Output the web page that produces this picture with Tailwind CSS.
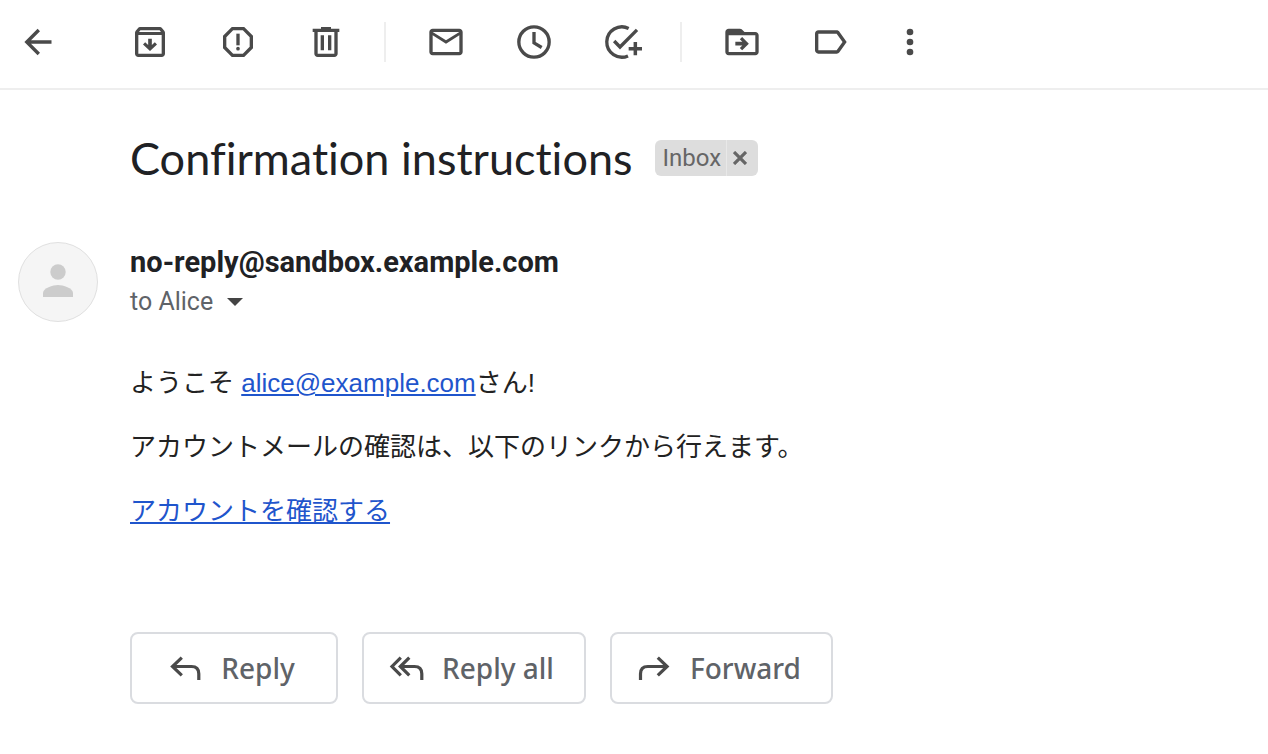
<!DOCTYPE html>
<html lang="ja">
<head>
  <meta charset="UTF-8" />
  <meta name="viewport" content="width=device-width, initial-scale=1" />
  <title>Confirmation instructions</title>
  <script src="https://cdn.jsdelivr.net/npm/@tailwindcss/browser@4"></script>
</head>
<body class="bg-white text-[#202124] font-[Roboto,'Noto_Sans_CJK_JP',sans-serif]">

  <!-- Toolbar -->
  <header class="flex items-center border-b-2 border-[#eeeeee] pt-[22px] pb-[26px] pl-[18px] text-[#4a4a4a]">
    <button type="button" aria-label="Back" class="mr-[72px]">
      <svg class="size-10" viewBox="0 0 40 40" fill="none" stroke="currentColor" stroke-width="3.4"><path d="M33.5 20H9M20.8 8L8.8 20l12 12"/></svg>
    </button>

    <div class="flex gap-12">
      <button type="button" aria-label="Archive">
        <svg class="size-10" viewBox="0 0 24 24" fill="currentColor"><path d="M20.54 5.23l-1.39-1.68C18.88 3.21 18.47 3 18 3H6c-.47 0-.88.21-1.16.55L3.46 5.23C3.17 5.57 3 6.02 3 6.5V19c0 1.1.9 2 2 2h14c1.1 0 2-.9 2-2V6.5c0-.48-.17-.93-.46-1.27zM6.24 5h11.52l.83 1H5.42l.82-1zM5 19V7.8h14V19H5z"/><path d="M16.2 13.5l-4.2 3.9-4.2-3.9 1.3-1.4 1.8 1.7V10h2.2v3.8l1.8-1.7z"/></svg>
      </button>
      <button type="button" aria-label="Report spam">
        <svg class="size-10" viewBox="0 0 24 24" fill="currentColor"><path d="M15.73 3H8.27L3 8.27v7.46L8.27 21h7.46L21 15.73V8.27L15.73 3zM19 14.9L14.9 19H9.1L5 14.9V9.1L9.1 5h5.8L19 9.1v5.8z"/><circle cx="12" cy="16" r="1.1"/><path d="M11 7h2v7h-2z"/></svg>
      </button>
      <button type="button" aria-label="Delete">
        <svg class="size-10" viewBox="0 0 24 24" fill="currentColor"><path d="M15 4V3H9v1H4v2h1v13c0 1.1.9 2 2 2h10c1.1 0 2-.9 2-2V6h1V4h-5zm2 15H7V6h10v13z"/><path d="M8.8 8h2v9h-2zm4.4 0h2v9h-2z"/></svg>
      </button>
    </div>

    <div class="mx-[38px] h-10 w-0.5 bg-[#eeeeee]"></div>

    <div class="flex gap-12 pl-0.5">
      <button type="button" aria-label="Mark as unread">
        <svg class="size-10" viewBox="0 0 24 24" fill="currentColor"><path d="M22 6c0-1.1-.9-2-2-2H4c-1.1 0-2 .9-2 2v12c0 1.1.9 2 2 2h16c1.1 0 2-.9 2-2V6zm-2 0l-8 5-8-5h16zm0 12H4V8l8 5 8-5v10z"/></svg>
      </button>
      <button type="button" aria-label="Snooze">
        <svg class="size-10" viewBox="0 0 24 24" fill="none" stroke="currentColor" stroke-width="2"><circle cx="12" cy="12" r="9.1"/><path d="M12 6v6.5l4.6 2.8"/></svg>
      </button>
      <button type="button" aria-label="Add to tasks">
        <svg class="size-10" viewBox="0 0 24 24" fill="none" stroke="currentColor" stroke-width="2"><path d="M16 3.85A9.1 9.1 0 1 0 15.6 20.35M7.3 11.4l3.5 3.6L21 4.7"/><path stroke-width="2.1" d="M16 16h8M20 12v8"/></svg>
      </button>
    </div>

    <div class="mx-[38px] h-10 w-0.5 bg-[#eeeeee]"></div>

    <div class="flex gap-12 pl-0.5">
      <button type="button" aria-label="Move to">
        <svg class="size-10" viewBox="0 0 24 24" fill="currentColor"><path d="M20 6h-6.5l-1.7-1.6c-.3-.3-.6-.4-1-.4H4c-1.1 0-2 .9-2 2v12c0 1.1.9 2 2 2h16c1.1 0 2-.9 2-2V8c0-1.1-.9-2-2-2zm0 12H4V8h16v10z"/><path d="M12.1 17l-1.4-1.4 1.5-1.5H8v-2.2h4.2l-1.5-1.5L12.1 9l4 4z"/></svg>
      </button>
      <button type="button" aria-label="Labels">
        <svg class="size-10" viewBox="0 0 24 24" fill="currentColor"><path d="M17.63 5.84C17.27 5.33 16.67 5 16 5H5C3.9 5 3 5.9 3 7v10c0 1.1.9 2 2 2h11c.67 0 1.27-.33 1.63-.84L22 12l-4.37-6.16zM16 17H5V7h11l3.55 5L16 17z"/></svg>
      </button>
    </div>
    <button type="button" aria-label="More" class="ml-10">
      <svg class="size-10" viewBox="0 0 24 24" fill="currentColor"><circle cx="12" cy="6" r="2"/><circle cx="12" cy="12" r="2"/><circle cx="12" cy="18" r="2"/></svg>
    </button>
  </header>

  <main>
    <!-- Subject -->
    <div class="flex items-center gap-[22px] pt-10 pl-[130px]">
      <h1 class="font-[Lato,sans-serif] text-[45px] leading-14 [font-variant-ligatures:none]">Confirmation instructions</h1>
      <div class="flex h-9 overflow-hidden rounded-md bg-[#dddddd] text-2xl text-[#666666]">
        <span class="border-r border-[#e8e8e8] pr-[5px] pl-2 leading-9">Inbox</span>
        <button type="button" aria-label="Remove label Inbox" class="pr-[11px] pl-1.5">
          <svg class="size-3.5" viewBox="0 0 14 14" stroke="currentColor" stroke-width="3.2"><path d="M1 1l12 12M13 1L1 13"/></svg>
        </button>
      </div>
    </div>

    <!-- Message -->
    <article class="flex gap-8 pt-14 pl-[18px]">
      <div class="flex size-20 shrink-0 items-center justify-center rounded-full border border-[#e0e0e0] bg-[#f5f5f5]">
        <svg class="size-10" viewBox="0 0 40 40" fill="#cccccc"><circle cx="20" cy="10" r="7.7"/><path d="M5 35v-4c0-5 10-8 15-8s15 3 15 8v4z"/></svg>
      </div>
      <div>
        <div class="text-[29px] leading-10 font-bold">no-reply@sandbox.example.com</div>
        <div class="flex items-center gap-3.5 text-[25px] leading-10 text-[#5f6368]">
          to Alice
          <button type="button" aria-label="Show details">
            <svg class="h-2 w-4" viewBox="0 0 16 8" fill="#444444"><path d="M0 0h16L8 8z"/></svg>
          </button>
        </div>

        <div class="flex flex-col gap-6 pt-[41px] text-[26px] leading-10 font-['Liberation_Sans','Noto_Sans_CJK_JP',sans-serif] text-[#222222]">
          <p>ようこそ <a href="mailto:alice@example.com" class="text-[#1f55cc] underline">alice@example.com</a>さん!</p>
          <p>アカウントメールの確認は、以下のリンクから行えます。</p>
          <p><a href="#" class="text-[#1f55cc] underline">アカウントを確認する</a></p>
        </div>

        <div class="flex gap-6 pt-[101px] pb-[50px] font-['Noto_Sans',sans-serif] text-[28px] font-medium text-[#5f6368]">
          <button type="button" class="flex h-[72px] min-w-52 items-center justify-center gap-4 rounded-lg border-2 border-[#dadce0] pr-[30px] pl-[22px]">
            <svg class="size-10" viewBox="0 0 40 40" fill="none" stroke="#4a4a4a" stroke-width="3.2"><path d="M16.8 9.6L7.5 18.5l9.3 8.9M7 18.5h19.5q7.3 0 7.3 7.3V32"/></svg>
            Reply
          </button>
          <button type="button" class="flex h-[72px] min-w-52 items-center justify-center gap-4 rounded-lg border-2 border-[#dadce0] pr-[30px] pl-[22px]">
            <svg class="size-10" viewBox="0 0 40 40" fill="none" stroke="#4a4a4a" stroke-width="3.2"><path d="M14.8 9.6L6 18.5l8.8 8.9M23.3 9.6l-9 8.9 9 8.9M14 18.5h14.5q7.3 0 7.3 7.3V32"/></svg>
            Reply all
          </button>
          <button type="button" class="flex h-[72px] min-w-52 items-center justify-center gap-4 rounded-lg border-2 border-[#dadce0] pr-[30px] pl-[22px]">
            <svg class="size-10" viewBox="0 0 40 40" fill="none" stroke="#4a4a4a" stroke-width="3.2"><path d="M23.8 9.6l9.3 8.9-9.3 8.9M33 18.5H13.8q-7.3 0-7.3 7.3V32"/></svg>
            Forward
          </button>
        </div>
      </div>
    </article>
  </main>

</body>
</html>
